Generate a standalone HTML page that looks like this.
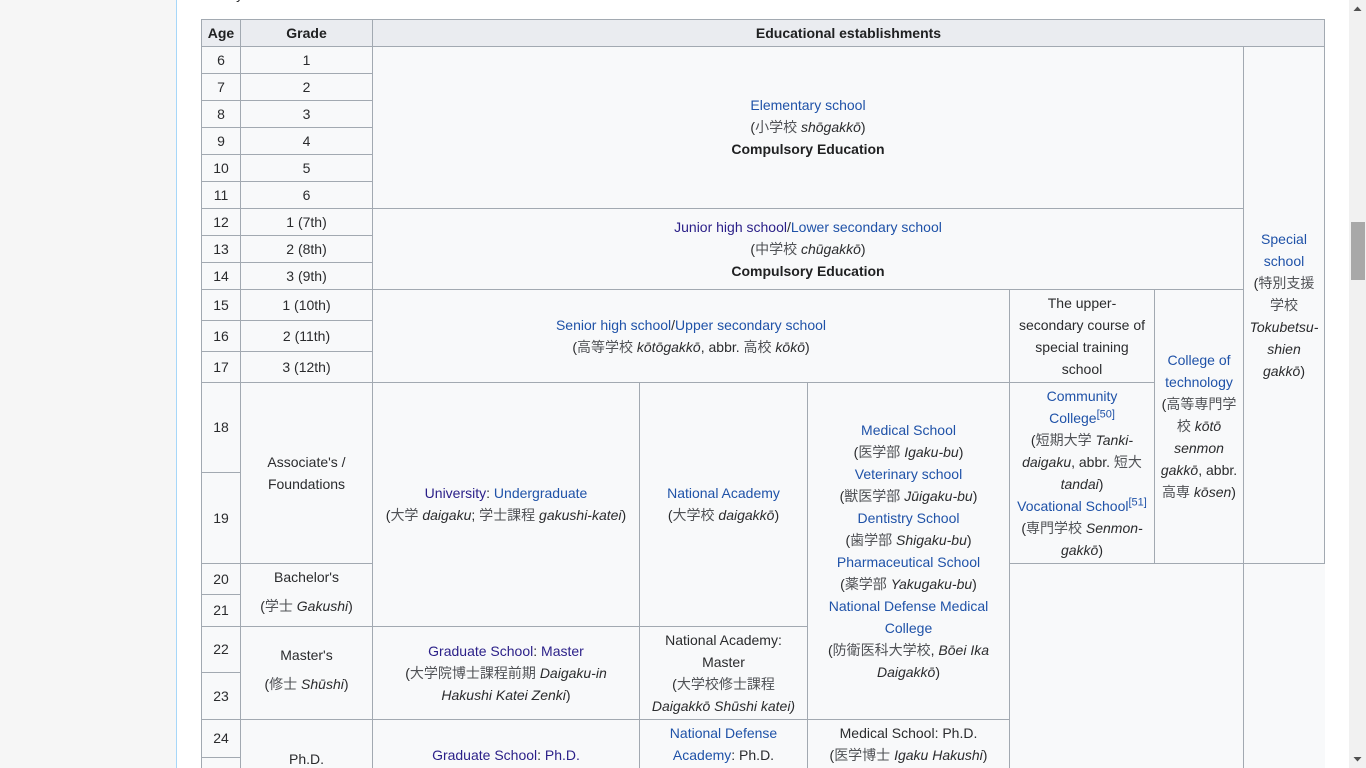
<!DOCTYPE html>
<html lang="en">
<head>
<meta charset="utf-8">
<title>Educational establishments</title>
<style>
html,body{margin:0;padding:0;width:1366px;height:768px;overflow:hidden;background:#fff;}
body{position:relative;font:14px/22px "Liberation Sans","WenQuanYi Zen Hei","Noto Sans CJK JP",sans-serif;color:#2a2b2d;}
.a{position:absolute;}
.h{position:absolute;height:1px;background:#a2a9b1;}
.v{position:absolute;width:1px;background:#a2a9b1;}
.t{position:absolute;text-align:center;white-space:nowrap;line-height:22px;}
a,.l{color:#1f52a8;text-decoration:none;}
a.p{color:#2a1f88;}
b{font-weight:bold;color:#202122;}
sup{font-size:11px;line-height:0;vertical-align:super;}
i{font-style:italic;}
s{text-decoration:none;color:#505256;}
</style>
</head>
<body>
<div class="a" style="left:0;top:0;width:176px;height:768px;background:#f6f6f6;"></div>
<div class="a" style="left:176px;top:0;width:1px;height:768px;background:#a7d7f9;"></div>
<div class="t" style="left:196px;top:-17px;width:60px;">many</div>

<div class="a" style="left:201px;top:19px;width:1124px;height:749px;background:#f8f9fa;"></div>
<div class="a" style="left:201px;top:19px;width:1124px;height:27px;background:#eaecf0;"></div>

<div class="v" style="left:201px;top:19px;height:749px;"></div>
<div class="v" style="left:240px;top:19px;height:749px;"></div>
<div class="v" style="left:372px;top:19px;height:749px;"></div>
<div class="v" style="left:639px;top:382px;height:386px;"></div>
<div class="v" style="left:807px;top:382px;height:386px;"></div>
<div class="v" style="left:1009px;top:289px;height:479px;"></div>
<div class="v" style="left:1154px;top:289px;height:274px;"></div>
<div class="v" style="left:1243px;top:46px;height:722px;"></div>
<div class="v" style="left:1324px;top:19px;height:544px;"></div>

<div class="h" style="left:201px;top:19px;width:1124px;"></div>
<div class="h" style="left:201px;top:46px;width:1124px;"></div>
<div class="h" style="left:201px;top:73px;width:171px;"></div>
<div class="h" style="left:201px;top:100px;width:171px;"></div>
<div class="h" style="left:201px;top:127px;width:171px;"></div>
<div class="h" style="left:201px;top:154px;width:171px;"></div>
<div class="h" style="left:201px;top:181px;width:171px;"></div>
<div class="h" style="left:201px;top:208px;width:1042px;"></div>
<div class="h" style="left:201px;top:235px;width:171px;"></div>
<div class="h" style="left:201px;top:262px;width:171px;"></div>
<div class="h" style="left:201px;top:289px;width:1042px;"></div>
<div class="h" style="left:201px;top:320px;width:171px;"></div>
<div class="h" style="left:201px;top:351px;width:171px;"></div>
<div class="h" style="left:201px;top:382px;width:953px;"></div>
<div class="h" style="left:201px;top:472px;width:39px;"></div>
<div class="h" style="left:201px;top:563px;width:171px;"></div>
<div class="h" style="left:1009px;top:563px;width:316px;"></div>
<div class="h" style="left:201px;top:594px;width:39px;"></div>
<div class="h" style="left:201px;top:626px;width:606px;"></div>
<div class="h" style="left:201px;top:672px;width:39px;"></div>
<div class="h" style="left:201px;top:719px;width:808px;"></div>
<div class="h" style="left:201px;top:757px;width:39px;"></div>

<!-- header -->
<div class="t" style="left:202px;width:38px;top:22px;"><b>Age</b></div>
<div class="t" style="left:241px;width:131px;top:22px;"><b>Grade</b></div>
<div class="t" style="left:373px;width:951px;top:22px;"><b>Educational establishments</b></div>

<!-- ages -->
<div class="t" style="left:202px;width:38px;top:49px;">6</div>
<div class="t" style="left:202px;width:38px;top:76px;">7</div>
<div class="t" style="left:202px;width:38px;top:103px;">8</div>
<div class="t" style="left:202px;width:38px;top:130px;">9</div>
<div class="t" style="left:202px;width:38px;top:157px;">10</div>
<div class="t" style="left:202px;width:38px;top:184px;">11</div>
<div class="t" style="left:202px;width:38px;top:211px;">12</div>
<div class="t" style="left:202px;width:38px;top:238px;">13</div>
<div class="t" style="left:202px;width:38px;top:265px;">14</div>
<div class="t" style="left:202px;width:38px;top:294px;">15</div>
<div class="t" style="left:202px;width:38px;top:325px;">16</div>
<div class="t" style="left:202px;width:38px;top:356px;">17</div>
<div class="t" style="left:202px;width:38px;top:416px;">18</div>
<div class="t" style="left:202px;width:38px;top:507px;">19</div>
<div class="t" style="left:202px;width:38px;top:568px;">20</div>
<div class="t" style="left:202px;width:38px;top:599px;">21</div>
<div class="t" style="left:202px;width:38px;top:638px;">22</div>
<div class="t" style="left:202px;width:38px;top:685px;">23</div>
<div class="t" style="left:202px;width:38px;top:727px;">24</div>

<!-- grades -->
<div class="t" style="left:241px;width:131px;top:49px;">1</div>
<div class="t" style="left:241px;width:131px;top:76px;">2</div>
<div class="t" style="left:241px;width:131px;top:103px;">3</div>
<div class="t" style="left:241px;width:131px;top:130px;">4</div>
<div class="t" style="left:241px;width:131px;top:157px;">5</div>
<div class="t" style="left:241px;width:131px;top:184px;">6</div>
<div class="t" style="left:241px;width:131px;top:211px;">1 (7th)</div>
<div class="t" style="left:241px;width:131px;top:238px;">2 (8th)</div>
<div class="t" style="left:241px;width:131px;top:265px;">3 (9th)</div>
<div class="t" style="left:241px;width:131px;top:294px;">1 (10th)</div>
<div class="t" style="left:241px;width:131px;top:325px;">2 (11th)</div>
<div class="t" style="left:241px;width:131px;top:356px;">3 (12th)</div>
<div class="t" style="left:241px;width:131px;top:451px;">Associate's /<br>Foundations</div>
<div class="t" style="left:241px;width:131px;top:566px;">Bachelor's</div>
<div class="t" style="left:241px;width:131px;top:595px;">(<s>学士</s> <i>Gakushi</i>)</div>
<div class="t" style="left:241px;width:131px;top:644px;">Master's</div>
<div class="t" style="left:241px;width:131px;top:673px;">(<s>修士</s> <i>Shūshi</i>)</div>
<div class="t" style="left:241px;width:131px;top:748px;">Ph.D.</div>

<!-- main -->
<div class="t" style="left:373px;width:870px;top:94px;"><a>Elementary school</a><br>(<s>小学校</s> <i>shōgakkō</i>)<br><b>Compulsory Education</b></div>
<div class="t" style="left:373px;width:870px;top:216px;"><a class="p">Junior high school</a>/<a>Lower secondary school</a><br>(<s>中学校</s> <i>chūgakkō</i>)<br><b>Compulsory Education</b></div>
<div class="t" style="left:373px;width:636px;top:314px;"><a>Senior high school</a>/<a>Upper secondary school</a><br>(<s>高等学校</s> <i>kōtōgakkō</i>, abbr. <s>高校</s> <i>kōkō</i>)</div>
<div class="t" style="left:1010px;width:144px;top:292px;">The upper-<br>secondary course of<br>special training<br>school</div>
<div class="t" style="left:1155px;width:88px;top:349px;"><a>College of<br>technology</a><br>(<s>高等専門学<br>校</s> <i>kōtō<br>senmon<br>gakkō</i>, abbr.<br><s>高専</s> <i>kōsen</i>)</div>
<div class="t" style="left:1244px;width:80px;top:228px;"><a>Special<br>school</a><br>(<s>特別支援<br>学校</s><br><i>Tokubetsu-<br>shien<br>gakkō</i>)</div>

<div class="t" style="left:373px;width:266px;top:482px;"><a class="p">University</a>: <a>Undergraduate</a><br>(<s>大学</s> <i>daigaku</i>; <s>学士課程</s> <i>gakushi-katei</i>)</div>
<div class="t" style="left:640px;width:167px;top:482px;"><a>National Academy</a><br>(<s>大学校</s> <i>daigakkō</i>)</div>
<div class="t" style="left:808px;width:201px;top:419px;"><a>Medical School</a><br>(<s>医学部</s> <i>Igaku-bu</i>)<br><a>Veterinary school</a><br>(<s>獣医学部</s> <i>Jūigaku-bu</i>)<br><a>Dentistry School</a><br>(<s>歯学部</s> <i>Shigaku-bu</i>)<br><a>Pharmaceutical School</a><br>(<s>薬学部</s> <i>Yakugaku-bu</i>)<br><a>National Defense Medical<br>College</a><br>(<s>防衛医科大学校</s>, <i>Bōei Ika<br>Daigakkō</i>)</div>
<div class="t" style="left:1010px;width:144px;top:385px;"><a>Community<br>College</a><sup class="l">[50]</sup><br>(<s>短期大学</s> <i>Tanki-<br>daigaku</i>, abbr. <s>短大</s><br><i>tandai</i>)<br><a>Vocational School</a><sup class="l">[51]</sup><br>(<s>専門学校</s> <i>Senmon-<br>gakkō</i>)</div>

<div class="t" style="left:373px;width:266px;top:640px;"><a class="p">Graduate School</a>: <a class="p">Master</a><br>(<s>大学院博士課程前期</s> <i>Daigaku-in<br>Hakushi Katei Zenki</i>)</div>
<div class="t" style="left:640px;width:167px;top:629px;">National Academy:<br>Master<br>(<s>大学校修士課程</s><br><i>Daigakkō Shūshi katei)</i></div>

<div class="t" style="left:373px;width:266px;top:744px;"><a class="p">Graduate School</a>: <a class="p">Ph.D.</a></div>
<div class="t" style="left:640px;width:167px;top:722px;"><a>National Defense<br>Academy</a>: Ph.D.</div>
<div class="t" style="left:808px;width:201px;top:722px;">Medical School: Ph.D.<br>(<s>医学博士</s> <i>Igaku Hakushi</i>)</div>

<!-- scrollbar -->
<div class="a" style="left:1349px;top:0;width:17px;height:768px;background:#f1f1f1;"></div>
<div class="a" style="left:1351px;top:222px;width:14px;height:58px;background:#a8a8a8;"></div>
<svg class="a" style="left:1349px;top:0;" width="17" height="17"><path d="M8.5 6.5L12.5 11H4.5Z" fill="#505050"/></svg>
<svg class="a" style="left:1349px;top:751px;" width="17" height="17"><path d="M4.5 6H12.5L8.5 10.5Z" fill="#505050"/></svg>
</body>
</html>
